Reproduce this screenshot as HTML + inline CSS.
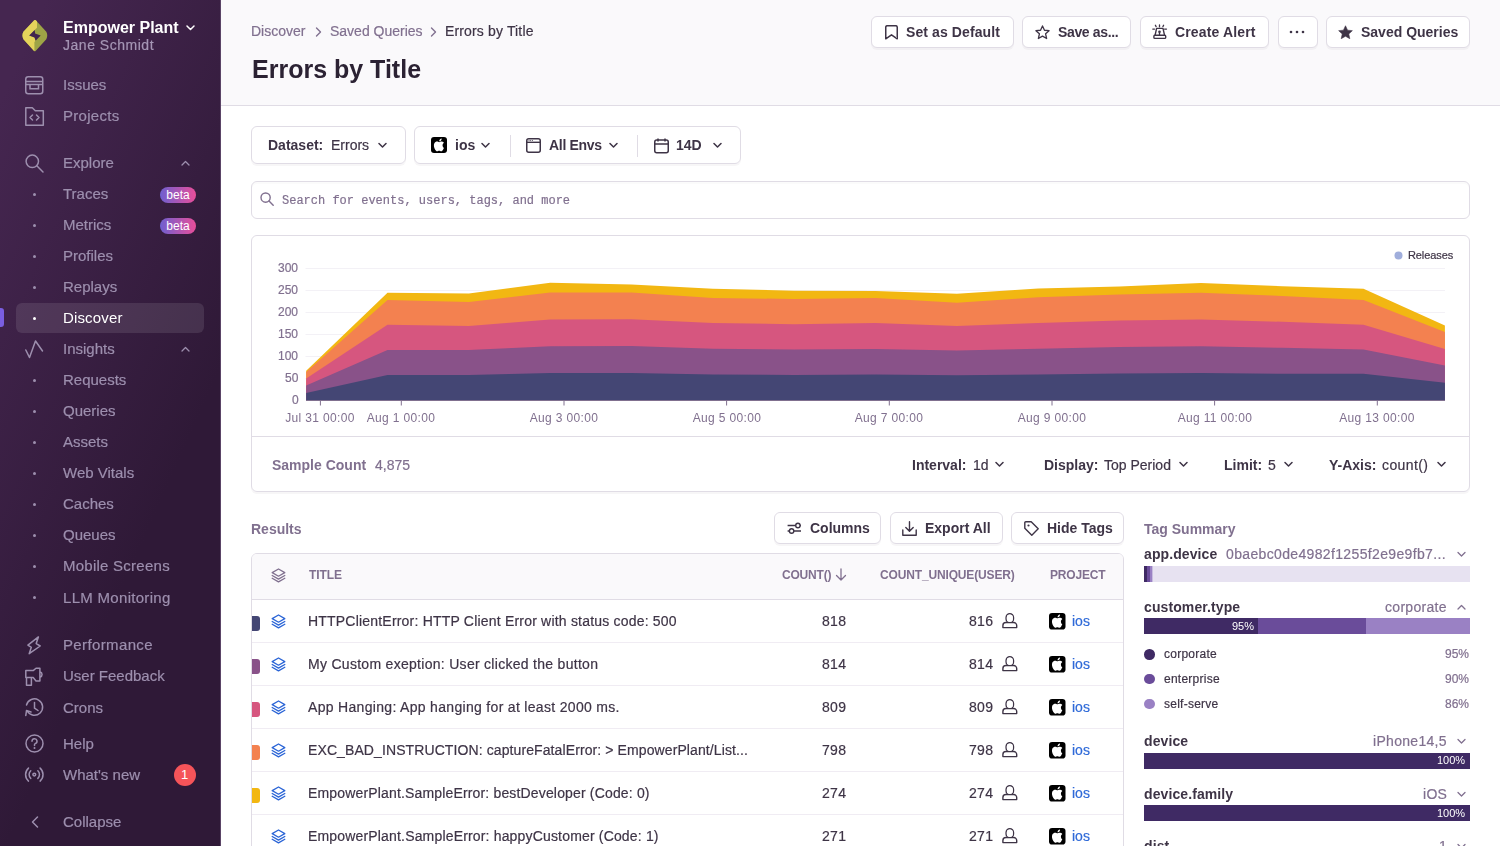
<!DOCTYPE html>
<html><head><meta charset="utf-8">
<style>
*{box-sizing:border-box;margin:0;padding:0}
html,body{width:1500px;height:846px;overflow:hidden;background:#fff;font-family:"Liberation Sans",sans-serif}
.a{position:absolute;white-space:nowrap;line-height:1;will-change:transform}
#sb{position:absolute;left:0;top:0;width:220px;height:846px;background:linear-gradient(294.17deg,#2f1937 35.57%,#452650 92.42%)}
.dot{position:absolute;left:33.2px;width:3px;height:3px;border-radius:50%;background:#9d8fae}
.ic{position:absolute;left:25.2px;width:19px;height:19px;overflow:visible}
.beta{position:absolute;left:160px;width:36px;height:16px;border-radius:8px;background:linear-gradient(90deg,#6e5fd0,#e94e9a);color:#fff;font-size:12px;line-height:16px;text-align:center}
#hdr{position:absolute;left:221px;top:0;width:1279px;height:106px;background:#faf9fb;border-bottom:1px solid #e0dce5}
.btn{position:absolute;height:32px;border:1px solid #e0dce5;border-radius:6px;background:#fff;box-shadow:0 2px 0 rgba(43,34,51,0.04)}

</style></head><body>
<div id="sb"></div>
<div style="position:absolute;left:220px;top:0;width:1px;height:846px;background:#5a4466"></div>
<svg class="a" style="left:20px;top:18px" width="30" height="36" viewBox="20 18 30 36">
<path d="M34.2 20.3 Q35 19.5 35.8 20.3 L46.3 31.8 Q48.2 35.5 46.3 39.2 L35.6 50.9 Q34.9 51.7 34.1 50.9 L23.4 39.2 Q21.5 35.5 23.4 31.8 Z" fill="#9da446"/>
<path d="M34.2 20.3 Q35 19.5 35.8 20.3 L37 21.6 L37 27.7 L34.7 30.1 L29.2 35.4 L34.5 37.5 L35.6 40.7 L34.4 42 L34.4 51.2 L34.1 50.9 L23.4 39.2 Q21.5 35.5 23.4 31.8 Z" fill="#e4d45b"/>
<path d="M29.2 35.4 L34.7 30.1 L35.1 33.4 L40.7 35.4 L35.6 40.7 L34.5 37.5 Z" fill="#41244f"/>
</svg>
<div class="a " style="top:19.70px;font-size:16px;font-weight:700;color:#ffffff;left:63.00px;">Empower Plant</div>
<svg class="a" style="left:186px;top:25px" width="9" height="6" viewBox="0 0 9 6"><path d="M1 1 L4.5 4.5 L8 1" stroke="#fff" stroke-width="1.5" fill="none" stroke-linecap="round" stroke-linejoin="round"/></svg>
<div class="a " style="top:37.60px;font-size:14px;-webkit-text-stroke:0.2px;color:#a596b5;left:63.00px;letter-spacing:0.52px;">Jane Schmidt</div>
<div style="position:absolute;left:16px;top:303px;width:188px;height:30px;border-radius:6px;background:rgba(255,255,255,0.1)"></div>
<div style="position:absolute;left:0;top:307.5px;width:4px;height:19px;border-radius:0 3px 3px 0;background:#7a5ee0"></div>
<div class="a " style="top:76.85px;font-size:15px;-webkit-text-stroke:0.2px;color:#9d8fae;left:62.90px;">Issues</div>
<svg class="ic" style="top:75.8px" viewBox="0 0 19 19"><path d="M3.25 0.75 h12 a2.5 2.5 0 0 1 2.5 2.5 v12 a2.5 2.5 0 0 1 -2.5 2.5 h-12 a2.5 2.5 0 0 1 -2.5 -2.5 v-12 a2.5 2.5 0 0 1 2.5 -2.5 Z M0.75 5.5 h17 M0.75 8.5 h17 M5 8.5 v4.3 h8.5 v-4.3" fill="none" stroke="#9d8fae" stroke-width="1.5"/></svg>
<div class="a " style="top:108.45px;font-size:15px;-webkit-text-stroke:0.2px;color:#9d8fae;left:62.90px;letter-spacing:0.3px;">Projects</div>
<svg class="ic" style="top:106.5px" viewBox="0 0 19 19"><path d="M0.8 0.8 h6.5 l3 3 h8 v14.5 h-17.5 Z" fill="none" stroke="#9d8fae" stroke-width="1.5" stroke-linejoin="round"/><path d="M7.5 8 l-2.5 2.5 l2.5 2.5 M11.5 8 l2.5 2.5 l-2.5 2.5" fill="none" stroke="#9d8fae" stroke-width="1.5" stroke-linecap="round" stroke-linejoin="round"/></svg>
<div class="a " style="top:155.25px;font-size:15px;-webkit-text-stroke:0.2px;color:#9d8fae;left:62.90px;">Explore</div>
<svg class="ic" style="top:153.5px" viewBox="0 0 19 19"><circle cx="7.3" cy="7.3" r="6.2" fill="none" stroke="#9d8fae" stroke-width="1.5"/><path d="M11.8 11.8 L18 18" stroke="#9d8fae" stroke-width="1.5" stroke-linecap="round"/></svg>
<div class="a " style="top:186.05px;font-size:15px;-webkit-text-stroke:0.2px;color:#9d8fae;left:62.90px;">Traces</div>
<div class="dot" style="top:192.8px;"></div>
<div class="a " style="top:217.05px;font-size:15px;-webkit-text-stroke:0.2px;color:#9d8fae;left:62.90px;">Metrics</div>
<div class="dot" style="top:223.8px;"></div>
<div class="a " style="top:248.05px;font-size:15px;-webkit-text-stroke:0.2px;color:#9d8fae;left:62.90px;">Profiles</div>
<div class="dot" style="top:254.8px;"></div>
<div class="a " style="top:278.95px;font-size:15px;-webkit-text-stroke:0.2px;color:#9d8fae;left:62.90px;">Replays</div>
<div class="dot" style="top:285.7px;"></div>
<div class="a " style="top:310.05px;font-size:15px;color:#ffffff;left:62.90px;letter-spacing:0.15px;">Discover</div>
<div class="dot" style="top:316.8px;background:#fff;"></div>
<div class="a " style="top:341.05px;font-size:15px;-webkit-text-stroke:0.2px;color:#9d8fae;left:62.90px;">Insights</div>
<svg class="ic" style="top:340px" viewBox="0 0 19 19"><path d="M0.8 10 L4.5 17.5 L10.5 1 L17.5 11" fill="none" stroke="#9d8fae" stroke-width="1.5" stroke-linecap="round" stroke-linejoin="round"/></svg>
<div class="a " style="top:372.05px;font-size:15px;-webkit-text-stroke:0.2px;color:#9d8fae;left:62.90px;">Requests</div>
<div class="dot" style="top:378.8px;"></div>
<div class="a " style="top:403.05px;font-size:15px;-webkit-text-stroke:0.2px;color:#9d8fae;left:62.90px;">Queries</div>
<div class="dot" style="top:409.8px;"></div>
<div class="a " style="top:434.05px;font-size:15px;-webkit-text-stroke:0.2px;color:#9d8fae;left:62.90px;">Assets</div>
<div class="dot" style="top:440.8px;"></div>
<div class="a " style="top:465.05px;font-size:15px;-webkit-text-stroke:0.2px;color:#9d8fae;left:62.90px;">Web Vitals</div>
<div class="dot" style="top:471.8px;"></div>
<div class="a " style="top:496.05px;font-size:15px;-webkit-text-stroke:0.2px;color:#9d8fae;left:62.90px;">Caches</div>
<div class="dot" style="top:502.8px;"></div>
<div class="a " style="top:527.05px;font-size:15px;-webkit-text-stroke:0.2px;color:#9d8fae;left:62.90px;">Queues</div>
<div class="dot" style="top:533.8px;"></div>
<div class="a " style="top:558.45px;font-size:15px;-webkit-text-stroke:0.2px;color:#9d8fae;left:62.90px;letter-spacing:0.25px;">Mobile Screens</div>
<div class="dot" style="top:565.2px;"></div>
<div class="a " style="top:589.55px;font-size:15px;-webkit-text-stroke:0.2px;color:#9d8fae;left:62.90px;letter-spacing:0.3px;">LLM Monitoring</div>
<div class="dot" style="top:596.3px;"></div>
<div class="a " style="top:637.25px;font-size:15px;-webkit-text-stroke:0.2px;color:#9d8fae;left:62.90px;letter-spacing:0.37px;">Performance</div>
<svg class="ic" style="top:635.5px" viewBox="0 0 19 19"><path d="M13.4 0.9 L2.9 9.1 L6.3 11.3 L4.2 17.7 L15.2 10 L11.2 7.6 Z" fill="none" stroke="#9d8fae" stroke-width="1.5" stroke-linejoin="round"/></svg>
<div class="a " style="top:668.25px;font-size:15px;-webkit-text-stroke:0.2px;color:#9d8fae;left:62.90px;">User Feedback</div>
<svg class="ic" style="top:666.5px" viewBox="0 0 19 19"><path d="M0.8 3.6 H8.2 L11 1.2 H14.9 V13.9 H11 L8.2 10.6 H0.8 Z M14.9 4.6 a2.9 2.9 0 0 1 0 5.6 M1.5 10.6 V18.2 H6.4 V10.6" fill="none" stroke="#9d8fae" stroke-width="1.5" stroke-linejoin="round"/></svg>
<div class="a " style="top:699.55px;font-size:15px;-webkit-text-stroke:0.2px;color:#9d8fae;left:62.90px;">Crons</div>
<svg class="ic" style="top:698px" viewBox="0 0 19 19"><path d="M2.2 13 A8.2 8.2 0 1 0 1.5 7" fill="none" stroke="#9d8fae" stroke-width="1.5" stroke-linecap="round"/><path d="M9.5 4.5 V10 L13 12.5" fill="none" stroke="#9d8fae" stroke-width="1.5" stroke-linecap="round"/><path d="M0.8 17.5 L1.5 12.5 L6 14" fill="none" stroke="#9d8fae" stroke-width="1.5" stroke-linecap="round" stroke-linejoin="round"/></svg>
<div class="a " style="top:735.85px;font-size:15px;-webkit-text-stroke:0.2px;color:#9d8fae;left:62.90px;">Help</div>
<svg class="ic" style="top:734px" viewBox="0 0 19 19"><circle cx="9.5" cy="9.5" r="8.5" fill="none" stroke="#9d8fae" stroke-width="1.5"/><path d="M7 7.2 a2.5 2.5 0 1 1 3.2 2.4 q-0.7 0.3 -0.7 1.2 v0.8" fill="none" stroke="#9d8fae" stroke-width="1.5" stroke-linecap="round"/><circle cx="9.5" cy="14" r="1" fill="#9d8fae"/></svg>
<div class="a " style="top:766.85px;font-size:15px;-webkit-text-stroke:0.2px;color:#9d8fae;left:62.90px;">What&#39;s new</div>
<svg class="ic" style="top:765px" viewBox="0 0 19 19"><circle cx="9.3" cy="9.6" r="1.4" fill="none" stroke="#9d8fae" stroke-width="1.5"/><path d="M5.75 5.8 A5.2 5.2 0 0 0 5.75 13.4 M12.85 5.8 A5.2 5.2 0 0 1 12.85 13.4 M3.5 3.1 A8.7 8.7 0 0 0 3.5 16.1 M15.1 3.1 A8.7 8.7 0 0 1 15.1 16.1" fill="none" stroke="#9d8fae" stroke-width="1.5" stroke-linecap="round"/></svg>
<div class="a " style="top:814.15px;font-size:15px;-webkit-text-stroke:0.2px;color:#9d8fae;left:62.90px;">Collapse</div>
<svg class="ic" style="top:812px" viewBox="0 0 19 19"><path d="M12.5 5 L7.5 10 L12.5 15" fill="none" stroke="#9d8fae" stroke-width="1.5" stroke-linecap="round" stroke-linejoin="round"/></svg>
<svg class="a" style="left:181px;top:160px" width="9" height="6" viewBox="0 0 9 6"><path d="M1 5 L4.5 1.5 L8 5" stroke="#9d8fae" stroke-width="1.3" fill="none" stroke-linecap="round" stroke-linejoin="round"/></svg>
<svg class="a" style="left:181px;top:346px" width="9" height="6" viewBox="0 0 9 6"><path d="M1 5 L4.5 1.5 L8 5" stroke="#9d8fae" stroke-width="1.3" fill="none" stroke-linecap="round" stroke-linejoin="round"/></svg>
<div class="beta" style="top:186.5px">beta</div>
<div class="beta" style="top:217.5px">beta</div>
<div style="position:absolute;left:173.5px;top:763.5px;width:22px;height:22px;border-radius:50%;background:#f55459;color:#fff;font-size:13px;line-height:22px;text-align:center">1</div>
<div id="hdr"></div>
<div class="a " style="top:24.10px;font-size:14px;-webkit-text-stroke:0.2px;color:#80708f;left:251.30px;">Discover</div>
<svg class="a" style="left:315px;top:27px" width="7" height="10" viewBox="0 0 7 10"><path d="M1.5 1 L5.5 5 L1.5 9" stroke="#80708f" stroke-width="1.4" fill="none" stroke-linecap="round" stroke-linejoin="round"/></svg>
<div class="a " style="top:24.10px;font-size:14px;-webkit-text-stroke:0.2px;color:#80708f;left:329.60px;">Saved Queries</div>
<svg class="a" style="left:430px;top:27px" width="7" height="10" viewBox="0 0 7 10"><path d="M1.5 1 L5.5 5 L1.5 9" stroke="#80708f" stroke-width="1.4" fill="none" stroke-linecap="round" stroke-linejoin="round"/></svg>
<div class="a " style="top:24.10px;font-size:14px;-webkit-text-stroke:0.2px;color:#3e3446;left:445.00px;letter-spacing:0.15px;">Errors by Title</div>
<div class="a " style="top:56.95px;font-size:25px;font-weight:700;color:#2b2233;left:251.50px;">Errors by Title</div>
<div class="btn" style="left:871px;top:16px;width:143px;height:32px"></div>
<div class="btn" style="left:1022px;top:16px;width:109px;height:32px"></div>
<div class="btn" style="left:1139.5px;top:16px;width:129.5px;height:32px"></div>
<div class="btn" style="left:1277.5px;top:16px;width:40.0px;height:32px"></div>
<div class="btn" style="left:1325.5px;top:16px;width:144.0px;height:32px"></div>
<svg class="a" style="left:884.5px;top:25px" width="13" height="14.5" viewBox="0 0 13 14.5"><path d="M0.75 2.2 a1.5 1.5 0 0 1 1.5 -1.5 h8.5 a1.5 1.5 0 0 1 1.5 1.5 V13.8 L6.5 9.8 L0.75 13.8 Z" fill="none" stroke="#3e3446" stroke-width="1.5" stroke-linejoin="round"/></svg>
<div class="a " style="top:25.20px;font-size:14px;font-weight:700;color:#3e3446;left:906.40px;letter-spacing:0.1px;">Set as Default</div>
<svg class="a" style="left:1034.5px;top:24.5px" width="15" height="15" viewBox="0 0 16 16"><path d="M8 1 L10.1 5.6 L15 6.1 L11.3 9.4 L12.4 14.4 L8 11.8 L3.6 14.4 L4.7 9.4 L1 6.1 L5.9 5.6 Z" fill="none" stroke="#3e3446" stroke-width="1.4" stroke-linejoin="round"/></svg>
<div class="a " style="top:25.20px;font-size:14px;font-weight:700;color:#3e3446;left:1057.60px;letter-spacing:-0.35px;">Save as...</div>
<svg class="a" style="left:1148px;top:20px" width="24" height="24" viewBox="0 0 24 24"><rect x="5.9" y="15.3" width="11.8" height="3.1" rx="0.9" fill="none" stroke="#3e3446" stroke-width="1.4"/><path d="M7.1 15.2 L8.6 8.4 H15 L16.5 15.2" fill="none" stroke="#3e3446" stroke-width="1.4" stroke-linejoin="round"/><circle cx="11.5" cy="11.8" r="1.3" fill="#3e3446"/><path d="M11.5 12 V15 M11.5 5 V6.8 M7.4 5.3 L8.1 6.6 M15.6 5.3 L14.9 6.6 M4.8 9.1 H6.5 M16.6 9.1 H18.5" stroke="#3e3446" stroke-width="1.3" stroke-linecap="round"/></svg>
<div class="a " style="top:25.20px;font-size:14px;font-weight:700;color:#3e3446;left:1174.80px;letter-spacing:0.15px;">Create Alert</div>
<svg class="a" style="left:1289px;top:30px" width="16" height="4" viewBox="0 0 16 4"><circle cx="2" cy="2" r="1.3" fill="#3e3446"/><circle cx="8" cy="2" r="1.3" fill="#3e3446"/><circle cx="14" cy="2" r="1.3" fill="#3e3446"/></svg>
<svg class="a" style="left:1338px;top:24.5px" width="15" height="15" viewBox="0 0 16 16"><path d="M8 0.8 L10.2 5.5 L15.3 6 L11.5 9.5 L12.6 14.6 L8 12 L3.4 14.6 L4.5 9.5 L0.7 6 L5.8 5.5 Z" fill="#3e3446" stroke="#3e3446" stroke-width="0.6" stroke-linejoin="round"/></svg>
<div class="a " style="top:25.20px;font-size:14px;font-weight:700;color:#3e3446;left:1361.00px;">Saved Queries</div>
<div style="position:absolute;left:251px;top:126px;width:154.5px;height:38px;border:1px solid #e0dce5;border-radius:6px;box-shadow:0 2px 0 rgba(43,34,51,0.04)"></div>
<div class="a " style="top:138.40px;font-size:14px;font-weight:700;color:#3e3446;left:268.30px;">Dataset:</div>
<div class="a " style="top:138.40px;font-size:14px;-webkit-text-stroke:0.2px;color:#3e3446;left:331.30px;">Errors</div>
<svg class="a" style="left:377.5px;top:142.2px" width="9" height="6.5" viewBox="0 0 9 6.5"><path d="M1 1.5 L4.5 5 L8 1.5" stroke="#3e3446" stroke-width="1.5" fill="none" stroke-linecap="round" stroke-linejoin="round"/></svg>
<div style="position:absolute;left:414px;top:126px;width:326.5px;height:38px;border:1px solid #e0dce5;border-radius:6px;box-shadow:0 2px 0 rgba(43,34,51,0.04)"></div>
<svg class="a" style="left:431px;top:137px" width="16" height="16" viewBox="0 0 16 16"><rect x="0" y="0" width="16" height="16" rx="3" fill="#000"/>
<path transform="translate(8 8) scale(1.22) translate(-8 -8.2)" d="M10.9 8.4 c0-1.3 1.1-1.9 1.1-2 c-0.6-0.9-1.5-1-1.9-1 c-0.8-0.1-1.6 0.5-2 0.5 c-0.4 0-1-0.5-1.7-0.5 c-0.9 0-1.7 0.5-2.2 1.3 c-0.9 1.6-0.2 4 0.7 5.3 c0.4 0.6 0.9 1.3 1.6 1.3 c0.6 0 0.9-0.4 1.6-0.4 c0.7 0 1 0.4 1.7 0.4 c0.7 0 1.1-0.6 1.5-1.3 c0.5-0.7 0.7-1.4 0.7-1.4 c0 0-1.1-0.5-1.1-2.2 Z M9.7 4.5 c0.3-0.4 0.6-1 0.5-1.6 c-0.5 0-1.1 0.3-1.5 0.7 c-0.3 0.4-0.6 1-0.5 1.5 c0.6 0.1 1.1-0.2 1.5-0.6 Z" fill="#fff"/></svg>
<div class="a " style="top:138.40px;font-size:14px;font-weight:700;color:#3e3446;left:455.30px;">ios</div>
<svg class="a" style="left:480.8px;top:142.2px" width="9" height="6.5" viewBox="0 0 9 6.5"><path d="M1 1.5 L4.5 5 L8 1.5" stroke="#3e3446" stroke-width="1.5" fill="none" stroke-linecap="round" stroke-linejoin="round"/></svg>
<div style="position:absolute;left:509.5px;top:134.5px;width:1px;height:22px;background:#e0dce5"></div>
<svg class="a" style="left:526px;top:138px" width="15" height="15" viewBox="0 0 15 15"><rect x="0.75" y="0.75" width="13.5" height="13.5" rx="2" fill="none" stroke="#3e3446" stroke-width="1.5"/><path d="M0.75 4.3 h13.5" stroke="#3e3446" stroke-width="1.4"/><circle cx="3" cy="2.6" r="0.5" fill="#3e3446"/><circle cx="4.7" cy="2.6" r="0.5" fill="#3e3446"/><circle cx="6.4" cy="2.6" r="0.5" fill="#3e3446"/></svg>
<div class="a " style="top:138.40px;font-size:14px;font-weight:700;color:#3e3446;left:549.20px;letter-spacing:-0.3px;">All Envs</div>
<svg class="a" style="left:609px;top:142.2px" width="9" height="6.5" viewBox="0 0 9 6.5"><path d="M1 1.5 L4.5 5 L8 1.5" stroke="#3e3446" stroke-width="1.5" fill="none" stroke-linecap="round" stroke-linejoin="round"/></svg>
<div style="position:absolute;left:637px;top:134.5px;width:1px;height:22px;background:#e0dce5"></div>
<svg class="a" style="left:653.5px;top:137.5px" width="15" height="15.5" viewBox="0 0 15 15.5"><rect x="0.75" y="2" width="13.5" height="12.75" rx="2" fill="none" stroke="#3e3446" stroke-width="1.5"/><path d="M0.75 6 h13.5 M4 0.5 v3 M11 0.5 v3" stroke="#3e3446" stroke-width="1.5"/></svg>
<div class="a " style="top:138.40px;font-size:14px;font-weight:700;color:#3e3446;left:675.80px;">14D</div>
<svg class="a" style="left:712.5px;top:142.2px" width="9" height="6.5" viewBox="0 0 9 6.5"><path d="M1 1.5 L4.5 5 L8 1.5" stroke="#3e3446" stroke-width="1.5" fill="none" stroke-linecap="round" stroke-linejoin="round"/></svg>
<div style="position:absolute;left:251px;top:181px;width:1219px;height:37.5px;border:1px solid #e0dce5;border-radius:6px;box-shadow:inset 0 2px 0 rgba(43,34,51,0.02)"></div>
<svg class="a" style="left:259.5px;top:191.5px" width="14" height="14" viewBox="0 0 14 14"><circle cx="5.6" cy="5.6" r="4.6" fill="none" stroke="#80708f" stroke-width="1.4"/><path d="M9 9 L13.2 13.2" stroke="#80708f" stroke-width="1.4" stroke-linecap="round"/></svg>
<div class="a " style="top:194.70px;font-size:12px;-webkit-text-stroke:0.2px;color:#80708f;font-family:'Liberation Mono',monospace;left:282.00px;">Search for events, users, tags, and more</div>
<div style="position:absolute;left:251px;top:235px;width:1219px;height:257px;border:1px solid #e0dce5;border-radius:6px;box-shadow:0 2px 0 rgba(43,34,51,0.04)"></div>
<div style="position:absolute;left:252px;top:436px;width:1217px;height:1px;background:#e0dce5"></div>
<svg class="a" style="left:1393.5px;top:250.5px" width="9" height="9" viewBox="0 0 9 9"><circle cx="4.5" cy="4.5" r="4" fill="#a0aedc"/></svg>
<div class="a " style="top:249.65px;font-size:11px;-webkit-text-stroke:0.2px;color:#3e3446;left:1407.70px;letter-spacing:-0.1px;">Releases</div>
<div class="a " style="top:262.00px;font-size:12px;-webkit-text-stroke:0.2px;color:#80708f;right:1201.70px;">300</div>
<div class="a " style="top:284.00px;font-size:12px;-webkit-text-stroke:0.2px;color:#80708f;right:1201.70px;">250</div>
<div class="a " style="top:306.00px;font-size:12px;-webkit-text-stroke:0.2px;color:#80708f;right:1201.70px;">200</div>
<div class="a " style="top:328.00px;font-size:12px;-webkit-text-stroke:0.2px;color:#80708f;right:1201.70px;">150</div>
<div class="a " style="top:350.00px;font-size:12px;-webkit-text-stroke:0.2px;color:#80708f;right:1201.70px;">100</div>
<div class="a " style="top:372.00px;font-size:12px;-webkit-text-stroke:0.2px;color:#80708f;right:1201.70px;">50</div>
<div class="a " style="top:394.00px;font-size:12px;-webkit-text-stroke:0.2px;color:#80708f;right:1201.70px;">0</div>
<svg class="a" style="left:0;top:0" width="1500" height="846" viewBox="0 0 1500 846"><line x1="305.5" y1="268.5" x2="1445" y2="268.5" stroke="#f3f1f6" stroke-width="1"/><line x1="305.5" y1="290.5" x2="1445" y2="290.5" stroke="#f3f1f6" stroke-width="1"/><line x1="305.5" y1="312.5" x2="1445" y2="312.5" stroke="#f3f1f6" stroke-width="1"/><line x1="305.5" y1="334.5" x2="1445" y2="334.5" stroke="#f3f1f6" stroke-width="1"/><line x1="305.5" y1="356.5" x2="1445" y2="356.5" stroke="#f3f1f6" stroke-width="1"/><line x1="305.5" y1="378.5" x2="1445" y2="378.5" stroke="#f3f1f6" stroke-width="1"/><polygon points="306.2,400.5 306.2,370.8 387.5,292.8 468.9,293.5 550.2,282.7 631.5,284.5 712.9,288.7 794.2,290.8 875.5,291.0 956.9,293.8 1038.2,288.4 1119.5,286.4 1200.9,283.0 1282.2,286.2 1363.5,288.7 1444.9,325.5 1444.9,400.5" fill="#f2b712"/><polygon points="306.2,400.5 306.2,372.0 387.5,299.9 468.9,302.0 550.2,292.4 631.5,292.6 712.9,298.1 794.2,298.9 875.5,298.1 956.9,302.7 1038.2,297.2 1119.5,294.4 1200.9,292.8 1282.2,295.9 1363.5,299.9 1444.9,331.9 1444.9,400.5" fill="#f38150"/><polygon points="306.2,400.5 306.2,378.5 387.5,324.7 468.9,326.0 550.2,319.4 631.5,319.2 712.9,323.0 794.2,324.2 875.5,323.0 956.9,326.0 1038.2,323.0 1119.5,320.5 1200.9,319.4 1282.2,321.8 1363.5,324.7 1444.9,349.0 1444.9,400.5" fill="#d6567f"/><polygon points="306.2,400.5 306.2,385.6 387.5,349.9 468.9,350.0 550.2,346.3 631.5,346.0 712.9,348.7 794.2,349.5 875.5,349.0 956.9,350.4 1038.2,348.7 1119.5,347.0 1200.9,346.3 1282.2,347.8 1363.5,349.5 1444.9,365.6 1444.9,400.5" fill="#895289"/><polygon points="306.2,400.5 306.2,393.0 387.5,374.9 468.9,374.9 550.2,373.0 631.5,373.0 712.9,374.4 794.2,374.9 875.5,374.4 956.9,375.2 1038.2,374.4 1119.5,373.6 1200.9,373.0 1282.2,373.8 1363.5,373.8 1444.9,382.8 1444.9,400.5" fill="#444674"/><line x1="306" y1="400.5" x2="1445" y2="400.5" stroke="#80708f" stroke-width="1"/><line x1="320.4" y1="400.5" x2="320.4" y2="405.5" stroke="#80708f" stroke-width="1"/><line x1="401.3" y1="400.5" x2="401.3" y2="405.5" stroke="#80708f" stroke-width="1"/><line x1="564.0" y1="400.5" x2="564.0" y2="405.5" stroke="#80708f" stroke-width="1"/><line x1="726.6" y1="400.5" x2="726.6" y2="405.5" stroke="#80708f" stroke-width="1"/><line x1="889.3" y1="400.5" x2="889.3" y2="405.5" stroke="#80708f" stroke-width="1"/><line x1="1052.0" y1="400.5" x2="1052.0" y2="405.5" stroke="#80708f" stroke-width="1"/><line x1="1214.6" y1="400.5" x2="1214.6" y2="405.5" stroke="#80708f" stroke-width="1"/><line x1="1377.3" y1="400.5" x2="1377.3" y2="405.5" stroke="#80708f" stroke-width="1"/></svg>
<div class="a" style="left:260.4px;width:120px;text-align:center;top:411.70px;font-size:12px;color:#80708f;letter-spacing:0.35px">Jul 31 00:00</div>
<div class="a" style="left:341.3px;width:120px;text-align:center;top:411.70px;font-size:12px;color:#80708f;letter-spacing:0.35px">Aug 1 00:00</div>
<div class="a" style="left:504.0px;width:120px;text-align:center;top:411.70px;font-size:12px;color:#80708f;letter-spacing:0.35px">Aug 3 00:00</div>
<div class="a" style="left:666.6px;width:120px;text-align:center;top:411.70px;font-size:12px;color:#80708f;letter-spacing:0.35px">Aug 5 00:00</div>
<div class="a" style="left:829.3px;width:120px;text-align:center;top:411.70px;font-size:12px;color:#80708f;letter-spacing:0.35px">Aug 7 00:00</div>
<div class="a" style="left:992.0px;width:120px;text-align:center;top:411.70px;font-size:12px;color:#80708f;letter-spacing:0.35px">Aug 9 00:00</div>
<div class="a" style="left:1154.6px;width:120px;text-align:center;top:411.70px;font-size:12px;color:#80708f;letter-spacing:0.35px">Aug 11 00:00</div>
<div class="a" style="left:1317.3px;width:120px;text-align:center;top:411.70px;font-size:12px;color:#80708f;letter-spacing:0.35px">Aug 13 00:00</div>
<div class="a " style="top:457.80px;font-size:14px;font-weight:700;color:#80708f;left:272.00px;">Sample Count</div>
<div class="a " style="top:457.80px;font-size:14px;-webkit-text-stroke:0.2px;color:#80708f;left:375.00px;">4,875</div>
<div class="a " style="top:457.50px;font-size:14px;font-weight:700;color:#3e3446;left:911.60px;">Interval:</div>
<div class="a " style="top:457.50px;font-size:14px;-webkit-text-stroke:0.2px;color:#3e3446;left:973.00px;">1d</div>
<svg class="a" style="left:994.5px;top:461px" width="9" height="6.5" viewBox="0 0 9 6.5"><path d="M1 1.5 L4.5 5 L8 1.5" stroke="#3e3446" stroke-width="1.5" fill="none" stroke-linecap="round" stroke-linejoin="round"/></svg>
<div class="a " style="top:457.50px;font-size:14px;font-weight:700;color:#3e3446;left:1044.40px;">Display:</div>
<div class="a " style="top:457.50px;font-size:14px;-webkit-text-stroke:0.2px;color:#3e3446;left:1103.60px;">Top Period</div>
<svg class="a" style="left:1178.5px;top:461px" width="9" height="6.5" viewBox="0 0 9 6.5"><path d="M1 1.5 L4.5 5 L8 1.5" stroke="#3e3446" stroke-width="1.5" fill="none" stroke-linecap="round" stroke-linejoin="round"/></svg>
<div class="a " style="top:457.50px;font-size:14px;font-weight:700;color:#3e3446;left:1224.00px;">Limit:</div>
<div class="a " style="top:457.50px;font-size:14px;-webkit-text-stroke:0.2px;color:#3e3446;left:1268.00px;">5</div>
<svg class="a" style="left:1283.5px;top:461px" width="9" height="6.5" viewBox="0 0 9 6.5"><path d="M1 1.5 L4.5 5 L8 1.5" stroke="#3e3446" stroke-width="1.5" fill="none" stroke-linecap="round" stroke-linejoin="round"/></svg>
<div class="a " style="top:457.50px;font-size:14px;font-weight:700;color:#3e3446;left:1329.00px;">Y-Axis:</div>
<div class="a " style="top:457.50px;font-size:14px;-webkit-text-stroke:0.2px;color:#3e3446;left:1382.40px;letter-spacing:0.4px;">count()</div>
<svg class="a" style="left:1437px;top:461px" width="9" height="6.5" viewBox="0 0 9 6.5"><path d="M1 1.5 L4.5 5 L8 1.5" stroke="#3e3446" stroke-width="1.5" fill="none" stroke-linecap="round" stroke-linejoin="round"/></svg>
<div class="a " style="top:521.60px;font-size:14px;font-weight:700;color:#80708f;left:251.40px;">Results</div>
<div class="btn" style="left:774px;top:512px;width:106.5px;height:32px"></div>
<div class="btn" style="left:889.5px;top:512px;width:113.0px;height:32px"></div>
<div class="btn" style="left:1011px;top:512px;width:112.5px;height:32px"></div>
<svg class="a" style="left:786.5px;top:521px" width="15" height="14" viewBox="0 0 15 14"><path d="M0.6 4.5 H8.6 M13.2 4.5 H14 M0.6 10 H2.3 M6.9 10 H14" stroke="#3e3446" stroke-width="1.4"/><circle cx="10.9" cy="4.5" r="2.2" fill="none" stroke="#3e3446" stroke-width="1.4"/><circle cx="4.6" cy="10" r="2.2" fill="none" stroke="#3e3446" stroke-width="1.4"/></svg>
<div class="a " style="top:521.10px;font-size:14px;font-weight:700;color:#3e3446;left:809.60px;">Columns</div>
<svg class="a" style="left:902px;top:520.5px" width="15" height="15" viewBox="0 0 15 15"><path d="M7.5 0.8 V10 M3.8 6.5 L7.5 10.2 L11.2 6.5 M0.8 9 V14.2 H14.2 V9" fill="none" stroke="#3e3446" stroke-width="1.4" stroke-linecap="round" stroke-linejoin="round"/></svg>
<div class="a " style="top:521.10px;font-size:14px;font-weight:700;color:#3e3446;left:924.80px;">Export All</div>
<svg class="a" style="left:1023.5px;top:520.5px" width="15" height="15" viewBox="0 0 15 15"><path d="M0.8 1.8 a1 1 0 0 1 1 -1 H7.2 L14.2 7.8 L7.8 14.2 L0.8 7.2 Z" fill="none" stroke="#3e3446" stroke-width="1.4" stroke-linejoin="round"/><circle cx="4.5" cy="4.5" r="1.1" fill="#3e3446"/></svg>
<div class="a " style="top:521.10px;font-size:14px;font-weight:700;color:#3e3446;left:1046.50px;">Hide Tags</div>
<div style="position:absolute;left:251px;top:552.5px;width:873px;height:310px;border:1px solid #e0dce5;border-radius:6px;overflow:hidden;box-shadow:0 2px 0 rgba(43,34,51,0.04)"><div style="position:absolute;left:0;top:0;width:100%;height:46px;background:#faf9fb;border-bottom:1px solid #e0dce5"></div></div>
<svg class="a" style="left:270.8px;top:567.5px" width="15" height="15" viewBox="0 0 15 15"><path d="M7.5 1 L13.8 4.6 L7.5 8.2 L1.2 4.6 Z" fill="none" stroke="#80708f" stroke-width="1.3" stroke-linejoin="round"/><path d="M1.2 7.5 L7.5 11.1 L13.8 7.5 M1.2 10.3 L7.5 13.9 L13.8 10.3" fill="none" stroke="#80708f" stroke-width="1.3" stroke-linejoin="round" stroke-linecap="round"/></svg>
<div class="a " style="top:568.50px;font-size:12px;font-weight:700;color:#80708f;left:309.30px;letter-spacing:-0.1px;">TITLE</div>
<div class="a " style="top:568.70px;font-size:12px;font-weight:700;color:#80708f;left:782.00px;letter-spacing:-0.2px;">COUNT()</div>
<svg class="a" style="left:834.5px;top:567.5px" width="12" height="13" viewBox="0 0 12 13"><path d="M6 1 V12 M1.5 7.5 L6 12 L10.5 7.5" fill="none" stroke="#80708f" stroke-width="1.3" stroke-linecap="round" stroke-linejoin="round"/></svg>
<div class="a " style="top:568.70px;font-size:12px;font-weight:700;color:#80708f;left:880.40px;letter-spacing:-0.15px;">COUNT_UNIQUE(USER)</div>
<div class="a " style="top:568.70px;font-size:12px;font-weight:700;color:#80708f;left:1050.30px;letter-spacing:-0.2px;">PROJECT</div>
<div style="position:absolute;left:252px;top:616px;width:8px;height:14.5px;border-radius:0 3px 3px 0;background:#444674"></div>
<svg class="a" style="left:270.8px;top:614px" width="15" height="15" viewBox="0 0 15 15"><path d="M7.5 1 L13.8 4.6 L7.5 8.2 L1.2 4.6 Z" fill="none" stroke="#2a64d6" stroke-width="1.3" stroke-linejoin="round"/><path d="M1.2 7.5 L7.5 11.1 L13.8 7.5 M1.2 10.3 L7.5 13.9 L13.8 10.3" fill="none" stroke="#2a64d6" stroke-width="1.3" stroke-linejoin="round" stroke-linecap="round"/></svg>
<div class="a " style="top:614.10px;font-size:14px;-webkit-text-stroke:0.2px;color:#3e3446;left:308.00px;letter-spacing:0.2px;">HTTPClientError: HTTP Client Error with status code: 500</div>
<div class="a " style="top:614.10px;font-size:14px;-webkit-text-stroke:0.2px;color:#3e3446;right:653.40px;letter-spacing:0.3px;">818</div>
<div class="a " style="top:614.10px;font-size:14px;-webkit-text-stroke:0.2px;color:#3e3446;right:506.80px;letter-spacing:0.3px;">816</div>
<svg class="a" style="left:1001.5px;top:612.5px" width="16" height="16" viewBox="0 0 16 16"><rect x="4.1" y="0.7" width="7.4" height="9" rx="3.7" fill="#fff" stroke="#3e3446" stroke-width="1.4"/><path d="M0.9 14.6 V12.5 a3 3 0 0 1 3 -3 H11.7 a3 3 0 0 1 3 3 V14.6 Z" fill="#fff" stroke="#3e3446" stroke-width="1.4" stroke-linejoin="round"/><rect x="4.8" y="1.4" width="6" height="7.6" rx="3" fill="#fff"/></svg>
<svg class="a" style="left:1048.8px;top:612.5px" width="16.5" height="16.5" viewBox="0 0 16 16"><rect x="0" y="0" width="16" height="16" rx="3" fill="#000"/>
<path transform="translate(8 8) scale(1.22) translate(-8 -8.2)" d="M10.9 8.4 c0-1.3 1.1-1.9 1.1-2 c-0.6-0.9-1.5-1-1.9-1 c-0.8-0.1-1.6 0.5-2 0.5 c-0.4 0-1-0.5-1.7-0.5 c-0.9 0-1.7 0.5-2.2 1.3 c-0.9 1.6-0.2 4 0.7 5.3 c0.4 0.6 0.9 1.3 1.6 1.3 c0.6 0 0.9-0.4 1.6-0.4 c0.7 0 1 0.4 1.7 0.4 c0.7 0 1.1-0.6 1.5-1.3 c0.5-0.7 0.7-1.4 0.7-1.4 c0 0-1.1-0.5-1.1-2.2 Z M9.7 4.5 c0.3-0.4 0.6-1 0.5-1.6 c-0.5 0-1.1 0.3-1.5 0.7 c-0.3 0.4-0.6 1-0.5 1.5 c0.6 0.1 1.1-0.2 1.5-0.6 Z" fill="#fff"/></svg>
<div class="a " style="top:614.10px;font-size:14px;-webkit-text-stroke:0.2px;color:#2f6ad8;left:1071.70px;letter-spacing:0px;">ios</div>
<div style="position:absolute;left:252px;top:641.5px;width:871px;height:1px;background:#f0ecf3"></div>
<div style="position:absolute;left:252px;top:659px;width:8px;height:14.5px;border-radius:0 3px 3px 0;background:#895289"></div>
<svg class="a" style="left:270.8px;top:657px" width="15" height="15" viewBox="0 0 15 15"><path d="M7.5 1 L13.8 4.6 L7.5 8.2 L1.2 4.6 Z" fill="none" stroke="#2a64d6" stroke-width="1.3" stroke-linejoin="round"/><path d="M1.2 7.5 L7.5 11.1 L13.8 7.5 M1.2 10.3 L7.5 13.9 L13.8 10.3" fill="none" stroke="#2a64d6" stroke-width="1.3" stroke-linejoin="round" stroke-linecap="round"/></svg>
<div class="a " style="top:657.10px;font-size:14px;-webkit-text-stroke:0.2px;color:#3e3446;left:308.00px;letter-spacing:0.29px;">My Custom exeption: User clicked the button</div>
<div class="a " style="top:657.10px;font-size:14px;-webkit-text-stroke:0.2px;color:#3e3446;right:653.40px;letter-spacing:0.3px;">814</div>
<div class="a " style="top:657.10px;font-size:14px;-webkit-text-stroke:0.2px;color:#3e3446;right:506.80px;letter-spacing:0.3px;">814</div>
<svg class="a" style="left:1001.5px;top:655.5px" width="16" height="16" viewBox="0 0 16 16"><rect x="4.1" y="0.7" width="7.4" height="9" rx="3.7" fill="#fff" stroke="#3e3446" stroke-width="1.4"/><path d="M0.9 14.6 V12.5 a3 3 0 0 1 3 -3 H11.7 a3 3 0 0 1 3 3 V14.6 Z" fill="#fff" stroke="#3e3446" stroke-width="1.4" stroke-linejoin="round"/><rect x="4.8" y="1.4" width="6" height="7.6" rx="3" fill="#fff"/></svg>
<svg class="a" style="left:1048.8px;top:655.5px" width="16.5" height="16.5" viewBox="0 0 16 16"><rect x="0" y="0" width="16" height="16" rx="3" fill="#000"/>
<path transform="translate(8 8) scale(1.22) translate(-8 -8.2)" d="M10.9 8.4 c0-1.3 1.1-1.9 1.1-2 c-0.6-0.9-1.5-1-1.9-1 c-0.8-0.1-1.6 0.5-2 0.5 c-0.4 0-1-0.5-1.7-0.5 c-0.9 0-1.7 0.5-2.2 1.3 c-0.9 1.6-0.2 4 0.7 5.3 c0.4 0.6 0.9 1.3 1.6 1.3 c0.6 0 0.9-0.4 1.6-0.4 c0.7 0 1 0.4 1.7 0.4 c0.7 0 1.1-0.6 1.5-1.3 c0.5-0.7 0.7-1.4 0.7-1.4 c0 0-1.1-0.5-1.1-2.2 Z M9.7 4.5 c0.3-0.4 0.6-1 0.5-1.6 c-0.5 0-1.1 0.3-1.5 0.7 c-0.3 0.4-0.6 1-0.5 1.5 c0.6 0.1 1.1-0.2 1.5-0.6 Z" fill="#fff"/></svg>
<div class="a " style="top:657.10px;font-size:14px;-webkit-text-stroke:0.2px;color:#2f6ad8;left:1071.70px;letter-spacing:0px;">ios</div>
<div style="position:absolute;left:252px;top:684.5px;width:871px;height:1px;background:#f0ecf3"></div>
<div style="position:absolute;left:252px;top:702px;width:8px;height:14.5px;border-radius:0 3px 3px 0;background:#d6567f"></div>
<svg class="a" style="left:270.8px;top:700px" width="15" height="15" viewBox="0 0 15 15"><path d="M7.5 1 L13.8 4.6 L7.5 8.2 L1.2 4.6 Z" fill="none" stroke="#2a64d6" stroke-width="1.3" stroke-linejoin="round"/><path d="M1.2 7.5 L7.5 11.1 L13.8 7.5 M1.2 10.3 L7.5 13.9 L13.8 10.3" fill="none" stroke="#2a64d6" stroke-width="1.3" stroke-linejoin="round" stroke-linecap="round"/></svg>
<div class="a " style="top:700.10px;font-size:14px;-webkit-text-stroke:0.2px;color:#3e3446;left:308.00px;letter-spacing:0.315px;">App Hanging: App hanging for at least 2000 ms.</div>
<div class="a " style="top:700.10px;font-size:14px;-webkit-text-stroke:0.2px;color:#3e3446;right:653.40px;letter-spacing:0.3px;">809</div>
<div class="a " style="top:700.10px;font-size:14px;-webkit-text-stroke:0.2px;color:#3e3446;right:506.80px;letter-spacing:0.3px;">809</div>
<svg class="a" style="left:1001.5px;top:698.5px" width="16" height="16" viewBox="0 0 16 16"><rect x="4.1" y="0.7" width="7.4" height="9" rx="3.7" fill="#fff" stroke="#3e3446" stroke-width="1.4"/><path d="M0.9 14.6 V12.5 a3 3 0 0 1 3 -3 H11.7 a3 3 0 0 1 3 3 V14.6 Z" fill="#fff" stroke="#3e3446" stroke-width="1.4" stroke-linejoin="round"/><rect x="4.8" y="1.4" width="6" height="7.6" rx="3" fill="#fff"/></svg>
<svg class="a" style="left:1048.8px;top:698.5px" width="16.5" height="16.5" viewBox="0 0 16 16"><rect x="0" y="0" width="16" height="16" rx="3" fill="#000"/>
<path transform="translate(8 8) scale(1.22) translate(-8 -8.2)" d="M10.9 8.4 c0-1.3 1.1-1.9 1.1-2 c-0.6-0.9-1.5-1-1.9-1 c-0.8-0.1-1.6 0.5-2 0.5 c-0.4 0-1-0.5-1.7-0.5 c-0.9 0-1.7 0.5-2.2 1.3 c-0.9 1.6-0.2 4 0.7 5.3 c0.4 0.6 0.9 1.3 1.6 1.3 c0.6 0 0.9-0.4 1.6-0.4 c0.7 0 1 0.4 1.7 0.4 c0.7 0 1.1-0.6 1.5-1.3 c0.5-0.7 0.7-1.4 0.7-1.4 c0 0-1.1-0.5-1.1-2.2 Z M9.7 4.5 c0.3-0.4 0.6-1 0.5-1.6 c-0.5 0-1.1 0.3-1.5 0.7 c-0.3 0.4-0.6 1-0.5 1.5 c0.6 0.1 1.1-0.2 1.5-0.6 Z" fill="#fff"/></svg>
<div class="a " style="top:700.10px;font-size:14px;-webkit-text-stroke:0.2px;color:#2f6ad8;left:1071.70px;letter-spacing:0px;">ios</div>
<div style="position:absolute;left:252px;top:727.5px;width:871px;height:1px;background:#f0ecf3"></div>
<div style="position:absolute;left:252px;top:745px;width:8px;height:14.5px;border-radius:0 3px 3px 0;background:#f38150"></div>
<svg class="a" style="left:270.8px;top:743px" width="15" height="15" viewBox="0 0 15 15"><path d="M7.5 1 L13.8 4.6 L7.5 8.2 L1.2 4.6 Z" fill="none" stroke="#2a64d6" stroke-width="1.3" stroke-linejoin="round"/><path d="M1.2 7.5 L7.5 11.1 L13.8 7.5 M1.2 10.3 L7.5 13.9 L13.8 10.3" fill="none" stroke="#2a64d6" stroke-width="1.3" stroke-linejoin="round" stroke-linecap="round"/></svg>
<div class="a " style="top:743.10px;font-size:14px;-webkit-text-stroke:0.2px;color:#3e3446;left:308.00px;letter-spacing:0.1px;">EXC_BAD_INSTRUCTION: captureFatalError: &gt; EmpowerPlant/List...</div>
<div class="a " style="top:743.10px;font-size:14px;-webkit-text-stroke:0.2px;color:#3e3446;right:653.40px;letter-spacing:0.3px;">798</div>
<div class="a " style="top:743.10px;font-size:14px;-webkit-text-stroke:0.2px;color:#3e3446;right:506.80px;letter-spacing:0.3px;">798</div>
<svg class="a" style="left:1001.5px;top:741.5px" width="16" height="16" viewBox="0 0 16 16"><rect x="4.1" y="0.7" width="7.4" height="9" rx="3.7" fill="#fff" stroke="#3e3446" stroke-width="1.4"/><path d="M0.9 14.6 V12.5 a3 3 0 0 1 3 -3 H11.7 a3 3 0 0 1 3 3 V14.6 Z" fill="#fff" stroke="#3e3446" stroke-width="1.4" stroke-linejoin="round"/><rect x="4.8" y="1.4" width="6" height="7.6" rx="3" fill="#fff"/></svg>
<svg class="a" style="left:1048.8px;top:741.5px" width="16.5" height="16.5" viewBox="0 0 16 16"><rect x="0" y="0" width="16" height="16" rx="3" fill="#000"/>
<path transform="translate(8 8) scale(1.22) translate(-8 -8.2)" d="M10.9 8.4 c0-1.3 1.1-1.9 1.1-2 c-0.6-0.9-1.5-1-1.9-1 c-0.8-0.1-1.6 0.5-2 0.5 c-0.4 0-1-0.5-1.7-0.5 c-0.9 0-1.7 0.5-2.2 1.3 c-0.9 1.6-0.2 4 0.7 5.3 c0.4 0.6 0.9 1.3 1.6 1.3 c0.6 0 0.9-0.4 1.6-0.4 c0.7 0 1 0.4 1.7 0.4 c0.7 0 1.1-0.6 1.5-1.3 c0.5-0.7 0.7-1.4 0.7-1.4 c0 0-1.1-0.5-1.1-2.2 Z M9.7 4.5 c0.3-0.4 0.6-1 0.5-1.6 c-0.5 0-1.1 0.3-1.5 0.7 c-0.3 0.4-0.6 1-0.5 1.5 c0.6 0.1 1.1-0.2 1.5-0.6 Z" fill="#fff"/></svg>
<div class="a " style="top:743.10px;font-size:14px;-webkit-text-stroke:0.2px;color:#2f6ad8;left:1071.70px;letter-spacing:0px;">ios</div>
<div style="position:absolute;left:252px;top:770.5px;width:871px;height:1px;background:#f0ecf3"></div>
<div style="position:absolute;left:252px;top:788px;width:8px;height:14.5px;border-radius:0 3px 3px 0;background:#f2b712"></div>
<svg class="a" style="left:270.8px;top:786px" width="15" height="15" viewBox="0 0 15 15"><path d="M7.5 1 L13.8 4.6 L7.5 8.2 L1.2 4.6 Z" fill="none" stroke="#2a64d6" stroke-width="1.3" stroke-linejoin="round"/><path d="M1.2 7.5 L7.5 11.1 L13.8 7.5 M1.2 10.3 L7.5 13.9 L13.8 10.3" fill="none" stroke="#2a64d6" stroke-width="1.3" stroke-linejoin="round" stroke-linecap="round"/></svg>
<div class="a " style="top:786.10px;font-size:14px;-webkit-text-stroke:0.2px;color:#3e3446;left:308.00px;letter-spacing:0.16px;">EmpowerPlant.SampleError: bestDeveloper (Code: 0)</div>
<div class="a " style="top:786.10px;font-size:14px;-webkit-text-stroke:0.2px;color:#3e3446;right:653.40px;letter-spacing:0.3px;">274</div>
<div class="a " style="top:786.10px;font-size:14px;-webkit-text-stroke:0.2px;color:#3e3446;right:506.80px;letter-spacing:0.3px;">274</div>
<svg class="a" style="left:1001.5px;top:784.5px" width="16" height="16" viewBox="0 0 16 16"><rect x="4.1" y="0.7" width="7.4" height="9" rx="3.7" fill="#fff" stroke="#3e3446" stroke-width="1.4"/><path d="M0.9 14.6 V12.5 a3 3 0 0 1 3 -3 H11.7 a3 3 0 0 1 3 3 V14.6 Z" fill="#fff" stroke="#3e3446" stroke-width="1.4" stroke-linejoin="round"/><rect x="4.8" y="1.4" width="6" height="7.6" rx="3" fill="#fff"/></svg>
<svg class="a" style="left:1048.8px;top:784.5px" width="16.5" height="16.5" viewBox="0 0 16 16"><rect x="0" y="0" width="16" height="16" rx="3" fill="#000"/>
<path transform="translate(8 8) scale(1.22) translate(-8 -8.2)" d="M10.9 8.4 c0-1.3 1.1-1.9 1.1-2 c-0.6-0.9-1.5-1-1.9-1 c-0.8-0.1-1.6 0.5-2 0.5 c-0.4 0-1-0.5-1.7-0.5 c-0.9 0-1.7 0.5-2.2 1.3 c-0.9 1.6-0.2 4 0.7 5.3 c0.4 0.6 0.9 1.3 1.6 1.3 c0.6 0 0.9-0.4 1.6-0.4 c0.7 0 1 0.4 1.7 0.4 c0.7 0 1.1-0.6 1.5-1.3 c0.5-0.7 0.7-1.4 0.7-1.4 c0 0-1.1-0.5-1.1-2.2 Z M9.7 4.5 c0.3-0.4 0.6-1 0.5-1.6 c-0.5 0-1.1 0.3-1.5 0.7 c-0.3 0.4-0.6 1-0.5 1.5 c0.6 0.1 1.1-0.2 1.5-0.6 Z" fill="#fff"/></svg>
<div class="a " style="top:786.10px;font-size:14px;-webkit-text-stroke:0.2px;color:#2f6ad8;left:1071.70px;letter-spacing:0px;">ios</div>
<div style="position:absolute;left:252px;top:813.5px;width:871px;height:1px;background:#f0ecf3"></div>
<svg class="a" style="left:270.8px;top:829px" width="15" height="15" viewBox="0 0 15 15"><path d="M7.5 1 L13.8 4.6 L7.5 8.2 L1.2 4.6 Z" fill="none" stroke="#2a64d6" stroke-width="1.3" stroke-linejoin="round"/><path d="M1.2 7.5 L7.5 11.1 L13.8 7.5 M1.2 10.3 L7.5 13.9 L13.8 10.3" fill="none" stroke="#2a64d6" stroke-width="1.3" stroke-linejoin="round" stroke-linecap="round"/></svg>
<div class="a " style="top:829.10px;font-size:14px;-webkit-text-stroke:0.2px;color:#3e3446;left:308.00px;letter-spacing:0.17px;">EmpowerPlant.SampleError: happyCustomer (Code: 1)</div>
<div class="a " style="top:829.10px;font-size:14px;-webkit-text-stroke:0.2px;color:#3e3446;right:653.40px;letter-spacing:0.3px;">271</div>
<div class="a " style="top:829.10px;font-size:14px;-webkit-text-stroke:0.2px;color:#3e3446;right:506.80px;letter-spacing:0.3px;">271</div>
<svg class="a" style="left:1001.5px;top:827.5px" width="16" height="16" viewBox="0 0 16 16"><rect x="4.1" y="0.7" width="7.4" height="9" rx="3.7" fill="#fff" stroke="#3e3446" stroke-width="1.4"/><path d="M0.9 14.6 V12.5 a3 3 0 0 1 3 -3 H11.7 a3 3 0 0 1 3 3 V14.6 Z" fill="#fff" stroke="#3e3446" stroke-width="1.4" stroke-linejoin="round"/><rect x="4.8" y="1.4" width="6" height="7.6" rx="3" fill="#fff"/></svg>
<svg class="a" style="left:1048.8px;top:827.5px" width="16.5" height="16.5" viewBox="0 0 16 16"><rect x="0" y="0" width="16" height="16" rx="3" fill="#000"/>
<path transform="translate(8 8) scale(1.22) translate(-8 -8.2)" d="M10.9 8.4 c0-1.3 1.1-1.9 1.1-2 c-0.6-0.9-1.5-1-1.9-1 c-0.8-0.1-1.6 0.5-2 0.5 c-0.4 0-1-0.5-1.7-0.5 c-0.9 0-1.7 0.5-2.2 1.3 c-0.9 1.6-0.2 4 0.7 5.3 c0.4 0.6 0.9 1.3 1.6 1.3 c0.6 0 0.9-0.4 1.6-0.4 c0.7 0 1 0.4 1.7 0.4 c0.7 0 1.1-0.6 1.5-1.3 c0.5-0.7 0.7-1.4 0.7-1.4 c0 0-1.1-0.5-1.1-2.2 Z M9.7 4.5 c0.3-0.4 0.6-1 0.5-1.6 c-0.5 0-1.1 0.3-1.5 0.7 c-0.3 0.4-0.6 1-0.5 1.5 c0.6 0.1 1.1-0.2 1.5-0.6 Z" fill="#fff"/></svg>
<div class="a " style="top:829.10px;font-size:14px;-webkit-text-stroke:0.2px;color:#2f6ad8;left:1071.70px;letter-spacing:0px;">ios</div>
<div class="a " style="top:521.90px;font-size:14px;font-weight:700;color:#80708f;left:1144.30px;">Tag Summary</div>
<div class="a " style="top:547.10px;font-size:14px;-webkit-text-stroke:0.2px;color:#80708f;left:1225.50px;letter-spacing:0.35px;">0baebc0de4982f1255f2e9e9fb7...</div>
<div class="a " style="top:547.10px;font-size:14px;font-weight:700;color:#3e3446;left:1144.30px;letter-spacing:0.1px;">app.device</div>
<svg class="a" style="left:1457px;top:551px" width="9" height="6.5" viewBox="0 0 9 6.5"><path d="M1 1.5 L4.5 5 L8 1.5" stroke="#80708f" stroke-width="1.3" fill="none" stroke-linecap="round" stroke-linejoin="round"/></svg>
<div style="position:absolute;left:1144.3px;top:565.5px;width:325.5px;height:16px;background:#e7e2f1"></div>
<div style="position:absolute;left:1144.3px;top:565.5px;width:3px;height:16px;background:#3f2a64"></div><div style="position:absolute;left:1147.3px;top:565.5px;width:2.5px;height:16px;background:#6a4c9a"></div><div style="position:absolute;left:1149.8px;top:565.5px;width:2px;height:16px;background:#9a81c4"></div><div style="position:absolute;left:1151.8px;top:565.5px;width:1px;height:16px;background:#c9bde0"></div>
<div class="a " style="top:599.60px;font-size:14px;font-weight:700;color:#3e3446;left:1144.30px;letter-spacing:0.1px;">customer.type</div>
<div class="a " style="top:599.60px;font-size:14px;-webkit-text-stroke:0.2px;color:#80708f;right:52.80px;letter-spacing:0.3px;">corporate</div>
<svg class="a" style="left:1457px;top:603.5px" width="9" height="6.5" viewBox="0 0 9 6.5"><path d="M1 5 L4.5 1.5 L8 5" stroke="#80708f" stroke-width="1.3" fill="none" stroke-linecap="round" stroke-linejoin="round"/></svg>
<div style="position:absolute;left:1144.3px;top:618px;width:114px;height:16px;background:#3f2a64"></div><div style="position:absolute;left:1258.3px;top:618px;width:108px;height:16px;background:#6a4c9a"></div><div style="position:absolute;left:1366.3px;top:618px;width:103.5px;height:16px;background:#9a81c4"></div>
<div class="a " style="top:620.85px;font-size:11px;color:#ffffff;right:245.50px;">95%</div>
<div style="position:absolute;left:1144.3px;top:649.3px;width:10.5px;height:10.5px;border-radius:50%;background:#3f2a64"></div>
<div class="a " style="top:648.30px;font-size:12px;-webkit-text-stroke:0.2px;color:#3e3446;left:1163.50px;letter-spacing:0.25px;">corporate</div>
<div class="a " style="top:648.30px;font-size:12px;-webkit-text-stroke:0.2px;color:#80708f;right:30.50px;">95%</div>
<div style="position:absolute;left:1144.3px;top:673.9px;width:10.5px;height:10.5px;border-radius:50%;background:#6a4c9a"></div>
<div class="a " style="top:672.90px;font-size:12px;-webkit-text-stroke:0.2px;color:#3e3446;left:1163.50px;letter-spacing:0.25px;">enterprise</div>
<div class="a " style="top:672.90px;font-size:12px;-webkit-text-stroke:0.2px;color:#80708f;right:30.50px;">90%</div>
<div style="position:absolute;left:1144.3px;top:698.5px;width:10.5px;height:10.5px;border-radius:50%;background:#9a81c4"></div>
<div class="a " style="top:697.50px;font-size:12px;-webkit-text-stroke:0.2px;color:#3e3446;left:1163.50px;letter-spacing:0.25px;">self-serve</div>
<div class="a " style="top:697.50px;font-size:12px;-webkit-text-stroke:0.2px;color:#80708f;right:30.50px;">86%</div>
<div class="a " style="top:734.10px;font-size:14px;font-weight:700;color:#3e3446;left:1144.30px;letter-spacing:0.1px;">device</div>
<div class="a " style="top:734.10px;font-size:14px;-webkit-text-stroke:0.2px;color:#80708f;right:52.80px;letter-spacing:0.3px;">iPhone14,5</div>
<svg class="a" style="left:1457px;top:738px" width="9" height="6.5" viewBox="0 0 9 6.5"><path d="M1 1.5 L4.5 5 L8 1.5" stroke="#80708f" stroke-width="1.3" fill="none" stroke-linecap="round" stroke-linejoin="round"/></svg>
<div style="position:absolute;left:1144.3px;top:752.5px;width:325.5px;height:16px;background:#3f2a64"></div>
<div class="a " style="top:755.45px;font-size:11px;color:#ffffff;right:34.80px;">100%</div>
<div class="a " style="top:786.60px;font-size:14px;font-weight:700;color:#3e3446;left:1144.30px;letter-spacing:0.1px;">device.family</div>
<div class="a " style="top:786.60px;font-size:14px;-webkit-text-stroke:0.2px;color:#80708f;right:52.80px;letter-spacing:0.3px;">iOS</div>
<svg class="a" style="left:1457px;top:790.5px" width="9" height="6.5" viewBox="0 0 9 6.5"><path d="M1 1.5 L4.5 5 L8 1.5" stroke="#80708f" stroke-width="1.3" fill="none" stroke-linecap="round" stroke-linejoin="round"/></svg>
<div style="position:absolute;left:1144.3px;top:804.8px;width:325.5px;height:16px;background:#3f2a64"></div>
<div class="a " style="top:807.65px;font-size:11px;color:#ffffff;right:34.80px;">100%</div>
<div class="a " style="top:838.60px;font-size:14px;font-weight:700;color:#3e3446;left:1144.30px;letter-spacing:0.1px;">dist</div>
<div class="a " style="top:838.60px;font-size:14px;-webkit-text-stroke:0.2px;color:#80708f;right:52.80px;letter-spacing:0.3px;">1</div>
<svg class="a" style="left:1457px;top:842.5px" width="9" height="6.5" viewBox="0 0 9 6.5"><path d="M1 1.5 L4.5 5 L8 1.5" stroke="#80708f" stroke-width="1.3" fill="none" stroke-linecap="round" stroke-linejoin="round"/></svg>
</body></html>
